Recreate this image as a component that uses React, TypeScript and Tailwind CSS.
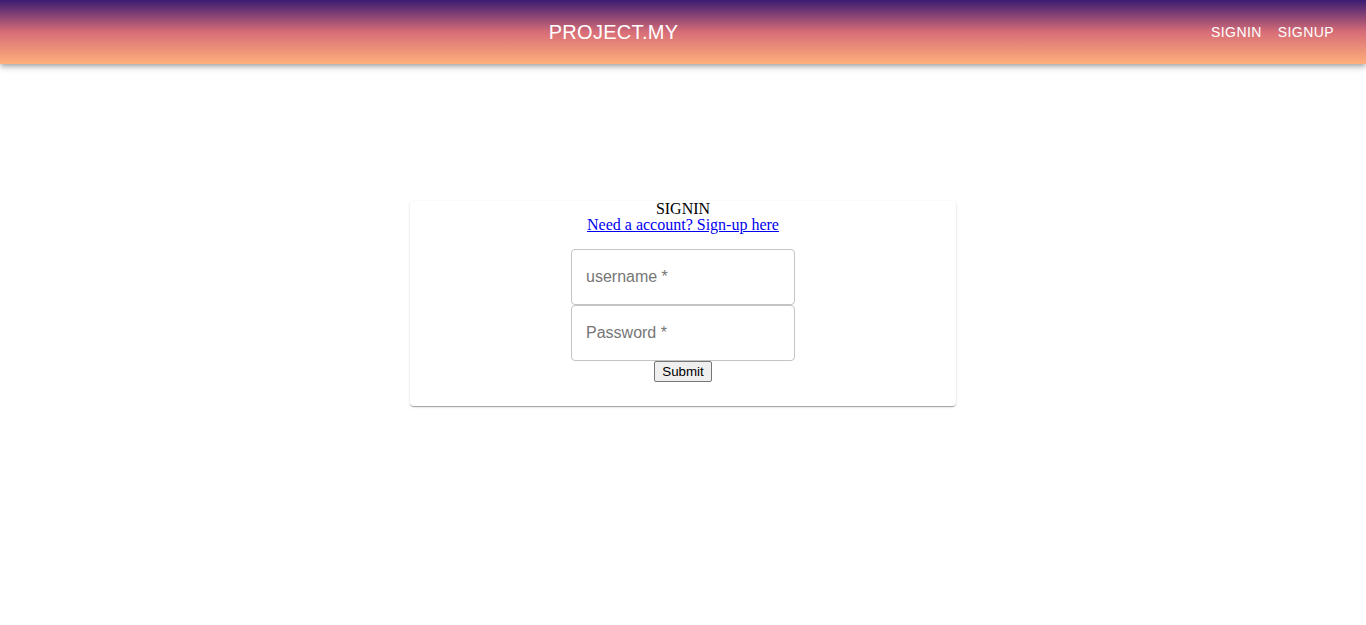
const NavButton = ({ label }: { label: string }) => (
  <button className="min-w-[64px] px-2 py-[6px] text-sm font-medium uppercase leading-[1.75] tracking-[0.03em] text-white">
    {label}
  </button>
);

const Field = ({ placeholder, type }: { placeholder: string; type: string }) => (
  <div className="block">
    <input
      type={type}
      placeholder={placeholder}
      className="h-[56px] w-[224px] rounded-[4px] border border-[#c4c4c4] bg-white px-[14px] text-base text-black placeholder:text-[#767676] outline-none"
    />
  </div>
);

export default function App() {
  return (
    <div className="min-h-screen bg-white font-['Liberation_Sans',Arial,sans-serif]">
      {/* App bar */}
      <header className="flex h-16 items-center bg-[linear-gradient(to_bottom,#3a1c71,#d76d77_50%,#ffaf7b)] px-6 shadow-[0_2px_4px_-1px_rgba(0,0,0,0.2),0_4px_5px_0_rgba(0,0,0,0.14),0_1px_10px_0_rgba(0,0,0,0.12)]">
        <h1 className="flex-grow text-center text-xl font-medium leading-[1.6] tracking-[0.3px] text-white">
          PROJECT.MY
        </h1>
        <NavButton label="Signin" />
        <NavButton label="Signup" />
      </header>

      {/* Signin card */}
      <div className="mx-auto mt-[137px] w-[546px] rounded-[4px] bg-white pb-6 text-center shadow-[0_2px_1px_-1px_rgba(0,0,0,0.2),0_1px_1px_0_rgba(0,0,0,0.14),0_1px_3px_0_rgba(0,0,0,0.12)]">
        <div className="font-['Liberation_Serif','Times_New_Roman',serif] text-base text-black">
          <div className="leading-[15px]">SIGNIN</div>
          <a href="#" className="block leading-[17px] text-[#0000ee] underline">
            Need a account? Sign-up here
          </a>
        </div>
        <form className="mt-[16px] flex flex-col items-center">
          <Field placeholder="username *" type="text" />
          <Field placeholder="Password *" type="password" />
          <button
            type="button"
            className="rounded-[2px] border border-[#767676] bg-[#efefef] px-[7px] py-[1px] text-[13.33px] leading-[17px] text-black"
          >
            Submit
          </button>
        </form>
      </div>
    </div>
  );
}
